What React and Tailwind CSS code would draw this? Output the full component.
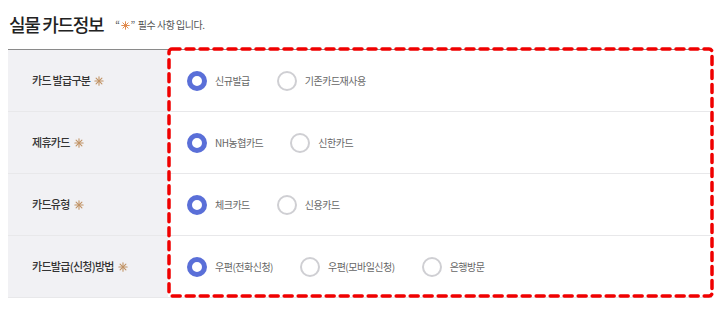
import React from 'react';

const rows = [
  { label: '카드 발급구분', options: ['신규발급', '기존카드재사용'] },
  { label: '제휴카드', options: ['NH농협카드', '신한카드'] },
  { label: '카드유형', options: ['체크카드', '신용카드'] },
  { label: '카드발급(신청)방법', options: ['우편(전화신청)', '우편(모바일신청)', '은행방문'] },
];

function Star({ className = '' }) {
  return (
    <svg viewBox="0 0 12 12" className={className} fill="none" stroke="currentColor" strokeWidth="1.3" strokeLinecap="round">
      <line x1="6" y1="1" x2="6" y2="11" />
      <line x1="1" y1="6" x2="11" y2="6" />
      <line x1="2.5" y1="2.5" x2="9.5" y2="9.5" />
      <line x1="9.5" y1="2.5" x2="2.5" y2="9.5" />
    </svg>
  );
}

function Radio({ checked, label }) {
  return (
    <label className="flex items-center gap-[8px]">
      <span
        className={
          checked
            ? 'w-5 h-5 rounded-full border-[5px] border-[#5a6fd8] bg-white'
            : 'w-5 h-5 rounded-full border-2 border-[#cfcfd3] bg-white'
        }
      />
      <span className="text-[10px] tracking-[-0.5px] text-[#666]">{label}</span>
    </label>
  );
}

export default function App() {
  return (
    <div className="w-[724px] h-[313px] bg-white" style={{ fontFamily: '"Noto Sans CJK KR", "Noto Sans", sans-serif' }}>
      <div className="flex items-end pl-[9px] pt-[8px] h-[33px]">
        <h2 className="text-[18px] leading-none font-medium text-[#222] tracking-[-1.3px]">실물 카드정보</h2>
        <p className="ml-[12px] text-[10px] leading-none text-[#555] tracking-[-0.5px] mb-[3px] flex items-center">
          <span>“</span>
          <Star className="w-[9px] h-[9px] text-[#e0894a] mx-[1px]" />
          <span>”</span>
          <span className="ml-[3px]">필수 사항 입니다.</span>
        </p>
      </div>

      <div className="relative ml-[8px] w-[704px] mt-[16px]">
        <div className="border-t border-[#8a8a8a]">
          {rows.map((row, i) => (
            <div key={i} className="flex h-[62px] border-b border-[#e8e8ea]">
              <div className="w-[160px] bg-[#f1f1f4] flex items-center pl-[24px] gap-[4px]">
                <span className="text-[11px] font-medium tracking-[-0.7px] text-[#333]">{row.label}</span>
                <Star className="w-[10px] h-[10px] text-[#c09263]" />
              </div>
              <div className="flex-1 flex items-center pl-[19px] gap-[27px]">
                {row.options.map((opt, j) => (
                  <Radio key={j} checked={j === 0} label={opt} />
                ))}
              </div>
            </div>
          ))}
        </div>
        <svg className="absolute left-[159px] top-[-2px] w-[547px] h-[252px] pointer-events-none" viewBox="0 0 547 252">
          <rect x="2" y="2" width="543" height="247" rx="3" fill="none" stroke="#f00000" strokeWidth="3.5" strokeDasharray="8 6" strokeLinecap="round" />
        </svg>
      </div>
    </div>
  );
}
